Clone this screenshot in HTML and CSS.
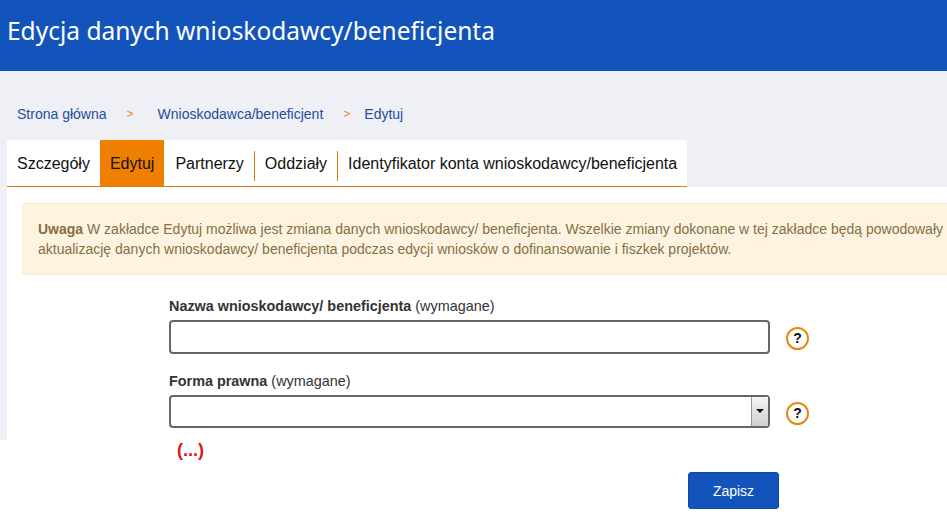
FILE: index.html
```html
<!DOCTYPE html>
<html lang="pl">
<head>
    <meta charset="UTF-8">
    <meta name="viewport" content="width=device-width, initial-scale=1.0">
    <title>Edycja danych wnioskodawcy/beneficjenta</title>
    <link rel="stylesheet" href="styles.css">
</head>
<body>
    <header class="top">
        <h1>Edycja danych wnioskodawcy/beneficjenta</h1>
    </header>

    <div class="grey">
        <nav class="crumbs">
            <a href="#" class="crumb-first">Strona główna</a>
            <span class="sep sep-first">&gt;</span>
            <a href="#">Wnioskodawca/beneficjent</a>
            <span class="sep">&gt;</span>
            <a href="#">Edytuj</a>
        </nav>
        <ul class="tabs">
            <li><a href="#">Szczegóły</a></li>
            <li class="active"><a href="#">Edytuj</a></li>
            <li class="line"><a href="#">Partnerzy</a></li>
            <li class="line"><a href="#">Oddziały</a></li>
            <li><a href="#">Identyfikator konta wnioskodawcy/beneficjenta</a></li>
        </ul>
    </div>

    <div class="row">
        <div class="strip"></div>
        <main class="content">
            <div class="alert">
                <b>Uwaga</b> W zakładce Edytuj możliwa jest zmiana danych wnioskodawcy/ beneficjenta. Wszelkie zmiany dokonane w tej zakładce będą powodowały aktualizację danych wnioskodawcy/ beneficjenta podczas edycji wniosków o dofinansowanie i fiszkek projektów.
            </div>

            <form class="form">
                <label for="nazwa"><b>Nazwa wnioskodawcy/ beneficjenta</b> (wymagane)</label>
                <div class="field">
                    <input type="text" id="nazwa">
                    <span class="help">?</span>
                </div>

                <label for="forma"><b>Forma prawna</b> (wymagane)</label>
                <div class="field">
                    <div class="select" id="forma">
                        <span class="arrow"></span>
                    </div>
                    <span class="help">?</span>
                </div>

                <div class="more">(...)</div>
                <div class="actions">
                    <button type="button" class="save">Zapisz</button>
                </div>
            </form>
        </main>
    </div>
</body>
</html>
```

FILE: styles.css
```css
html, body {
    margin: 0;
    padding: 0;
    overflow: hidden;
}
body {
    font-family: "Liberation Sans", Arial, sans-serif;
    background: #fff;
    width: 947px;
    height: 516px;
}
.top {
    background: #1254bb;
    height: 71px;
    box-sizing: border-box;
    padding: 15px 0 0 7px;
}
.top h1 {
    margin: 0;
    color: #fff;
    font-family: "Noto Sans", Tahoma, sans-serif;
    font-size: 24.5px;
    line-height: 32px;
    font-weight: 400;
    white-space: nowrap;
}
.grey {
    background: #eff0f5;
    height: 116px;
    padding-left: 7px;
    display: flex;
    flex-direction: column;
}
.crumbs {
    height: 69px;
    box-sizing: border-box;
    padding: 35px 0 0 10px;
    font-size: 14px;
    line-height: 16px;
    display: flex;
}
.crumbs a {
    color: #1f4e9c;
    text-decoration: none;
}
.sep {
    color: #e8892b;
    font-size: 12px;
    margin: 0 14px 0 20px;
}
.sep-first {
    margin: 0 24px 0 20px;
}
.tabs {
    list-style: none;
    margin: 0;
    padding: 0;
    display: flex;
    width: 680px;
    height: 47px;
    box-sizing: border-box;
    background: #fff;
    border-bottom: 1px solid #e07b14;
    font-size: 16px;
}
.tabs li {
    position: relative;
    flex: none;
}
.tabs a {
    display: block;
    height: 46px;
    box-sizing: border-box;
    color: #111;
    text-decoration: none;
    padding: 1px 10px 0;
    line-height: 46px;
    white-space: nowrap;
}
.tabs .active {
    background: #ee7f00;
    margin-right: 1px;
}
.tabs .line {
    padding-right: 1px;
}
.tabs .line::after {
    content: "";
    position: absolute;
    right: 0;
    top: 11px;
    height: 30px;
    width: 1px;
    background: #e07b14;
}
.row {
    display: flex;
    align-items: flex-start;
}
.strip {
    width: 7px;
    height: 253px;
    background: #eff0f5;
    flex: none;
}
.content {
    flex: 1;
    padding: 16px 0 0 15px;
}
.alert {
    width: 940px;
    height: 72px;
    box-sizing: border-box;
    padding: 15px 15px;
    background: #fcf4e1;
    border: 1px solid #f5ead3;
    border-radius: 3px;
    color: #8a6d45;
    font-size: 14px;
    line-height: 20px;
}
.form {
    margin: 21px 0 0 147px;
    width: 640px;
}
.form label {
    display: block;
    color: #333;
    font-size: 14.4px;
    line-height: 20px;
}
.field {
    display: flex;
    align-items: center;
    margin: 4px 0 17px;
}
.field input, .select {
    width: 601px;
    height: 34px;
    box-sizing: border-box;
    border: 2px solid #666;
    border-radius: 4px;
    background: #fff;
    margin: 0;
    padding: 0;
}
.select {
    display: flex;
    justify-content: flex-end;
    height: 33px;
}
.select + .help {
    margin-top: 4px;
}
.arrow {
    width: 16px;
    border-left: 1px solid #999;
    background: linear-gradient(#f4f4f4, #cfcfcf);
    position: relative;
}
.arrow::after {
    content: "";
    position: absolute;
    left: 4px;
    top: 12px;
    border-top: 4px solid #111;
    border-left: 4px solid transparent;
    border-right: 4px solid transparent;
}
.help {
    width: 23px;
    height: 23px;
    box-sizing: border-box;
    border: 2px solid #e8890c;
    border-radius: 50%;
    margin: 2px 0 0 16px;
    text-align: center;
    font-size: 14px;
    line-height: 19px;
    font-weight: 700;
    color: #111;
}
.more {
    color: #d9161f;
    font-size: 18px;
    font-weight: 700;
    line-height: 20px;
    margin: -5px 0 0 8px;
}
.actions {
    display: flex;
    margin-top: 12px;
    padding-left: 519px;
}
.save {
    width: 91px;
    height: 37px;
    background: #1254bb;
    color: #fff;
    border: 1px solid #0f4aa6;
    border-radius: 3px;
    font-family: "Liberation Sans", Arial, sans-serif;
    font-size: 14px;
    padding: 0;
}
```
